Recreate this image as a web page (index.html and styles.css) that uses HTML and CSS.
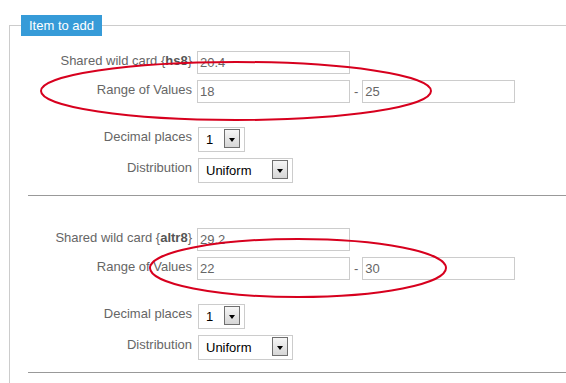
FILE: index.html
```html
<!DOCTYPE html>
<html lang="en">
<head>
  <meta charset="UTF-8" />
  <title>Item to add</title>
  <link rel="stylesheet" href="styles.css">
</head>
<body>

<fieldset class="item-box">
  <legend>Item to add</legend>

  <div class="fields">
    <div class="card">
      <div class="row row-shared">
        <label>Shared wild card {<b>hs8</b>}</label>
        <input type="text" value="20.4" />
      </div>
      <div class="row row-range">
        <label>Range of Values</label>
        <span class="range">
          <input type="text" value="18" />
          <span class="dash">-</span>
          <input type="text" value="25" />
        </span>
      </div>
      <div class="row row-decimal">
        <label>Decimal places</label>
        <span class="select select-small"><span>1</span><span class="arrow"></span></span>
      </div>
      <div class="row row-dist">
        <label>Distribution</label>
        <span class="select select-wide"><span>Uniform</span><span class="arrow"></span></span>
      </div>
    </div>
    <hr />

    <div class="card">
      <div class="row row-shared">
        <label>Shared wild card {<b>altr8</b>}</label>
        <input type="text" value="29.2" />
      </div>
      <div class="row row-range">
        <label>Range of Values</label>
        <span class="range">
          <input type="text" value="22" />
          <span class="dash">-</span>
          <input type="text" value="30" />
        </span>
      </div>
      <div class="row row-decimal">
        <label>Decimal places</label>
        <span class="select select-small"><span>1</span><span class="arrow"></span></span>
      </div>
      <div class="row row-dist">
        <label>Distribution</label>
        <span class="select select-wide"><span>Uniform</span><span class="arrow"></span></span>
      </div>
    </div>
    <hr />
  </div>
</fieldset>

<!-- red marks drawn over the form -->
<svg class="marks" width="566" height="383" viewBox="0 0 566 383">
  <ellipse cx="236" cy="91" rx="195" ry="29" />
  <ellipse cx="298" cy="268" rx="148" ry="29" />
</svg>

</body>
</html>
```

FILE: styles.css
```css
html {
  overflow: hidden;
}
body {
  margin: 0;
  padding-top: 15px;
  position: relative;
  background: #fff;
  font-family: "Liberation Sans", Arial, sans-serif;
  font-size: 13px;
  color: #666;
}

.item-box {
  margin: 0 0 0 9px;
  padding: 15px 0 10px 11px;
  border: 1px solid #ccc;
  border-right: none;
  border-bottom: none;
  min-width: 0;
}
.item-box legend {
  background: #369bd8;
  color: #fff;
  padding: 3px 8px;
  line-height: 15px;
}

.fields {
  padding-left: 7px;
}
.card + hr + .card {
  margin-top: 32px;
}
.row {
  display: flex;
  align-items: flex-start;
}
.row label {
  width: 164px;
  margin-right: 5px;
  padding-top: 2px;
  text-align: right;
  line-height: 15px;
}
.row label b {
  color: #555;
}
.row-shared { margin-bottom: 6px; }
.row-range { margin-bottom: 24px; }
.row-decimal { margin-bottom: 6px; }
.row-dist { margin-bottom: 12px; }

input {
  width: 153px;
  height: 23px;
  box-sizing: border-box;
  border: 1px solid #ccc;
  padding: 0 2px;
  margin: 0;
  font-family: inherit;
  font-size: 13px;
  color: #666;
}
.range {
  display: flex;
  align-items: center;
  gap: 4px;
}

.select {
  display: flex;
  align-items: center;
  justify-content: space-between;
  height: 25px;
  box-sizing: border-box;
  border: 1px solid #ccc;
  padding: 0 4px 0 7px;
  color: #000;
  margin-left: 1px;
}
.select-small { width: 47px; }
.select-wide { width: 95px; }
.arrow {
  width: 16px;
  height: 19px;
  box-sizing: border-box;
  border: 1px solid #6f6f6f;
  background: linear-gradient(#f6f6f6, #d6d6d6);
  margin-bottom: 2px;
  display: flex;
  align-items: center;
  justify-content: center;
}
.arrow::after {
  content: "";
  margin-top: 2px;
  border-top: 4px solid #000;
  border-left: 3.5px solid transparent;
  border-right: 3.5px solid transparent;
}

hr {
  margin: 0;
  border: none;
  border-top: 1px solid #999;
}

.marks {
  position: absolute;
  top: 0;
  left: 0;
  pointer-events: none;
}
.marks ellipse {
  fill: none;
  stroke: #d7001e;
  stroke-width: 2;
}
```
